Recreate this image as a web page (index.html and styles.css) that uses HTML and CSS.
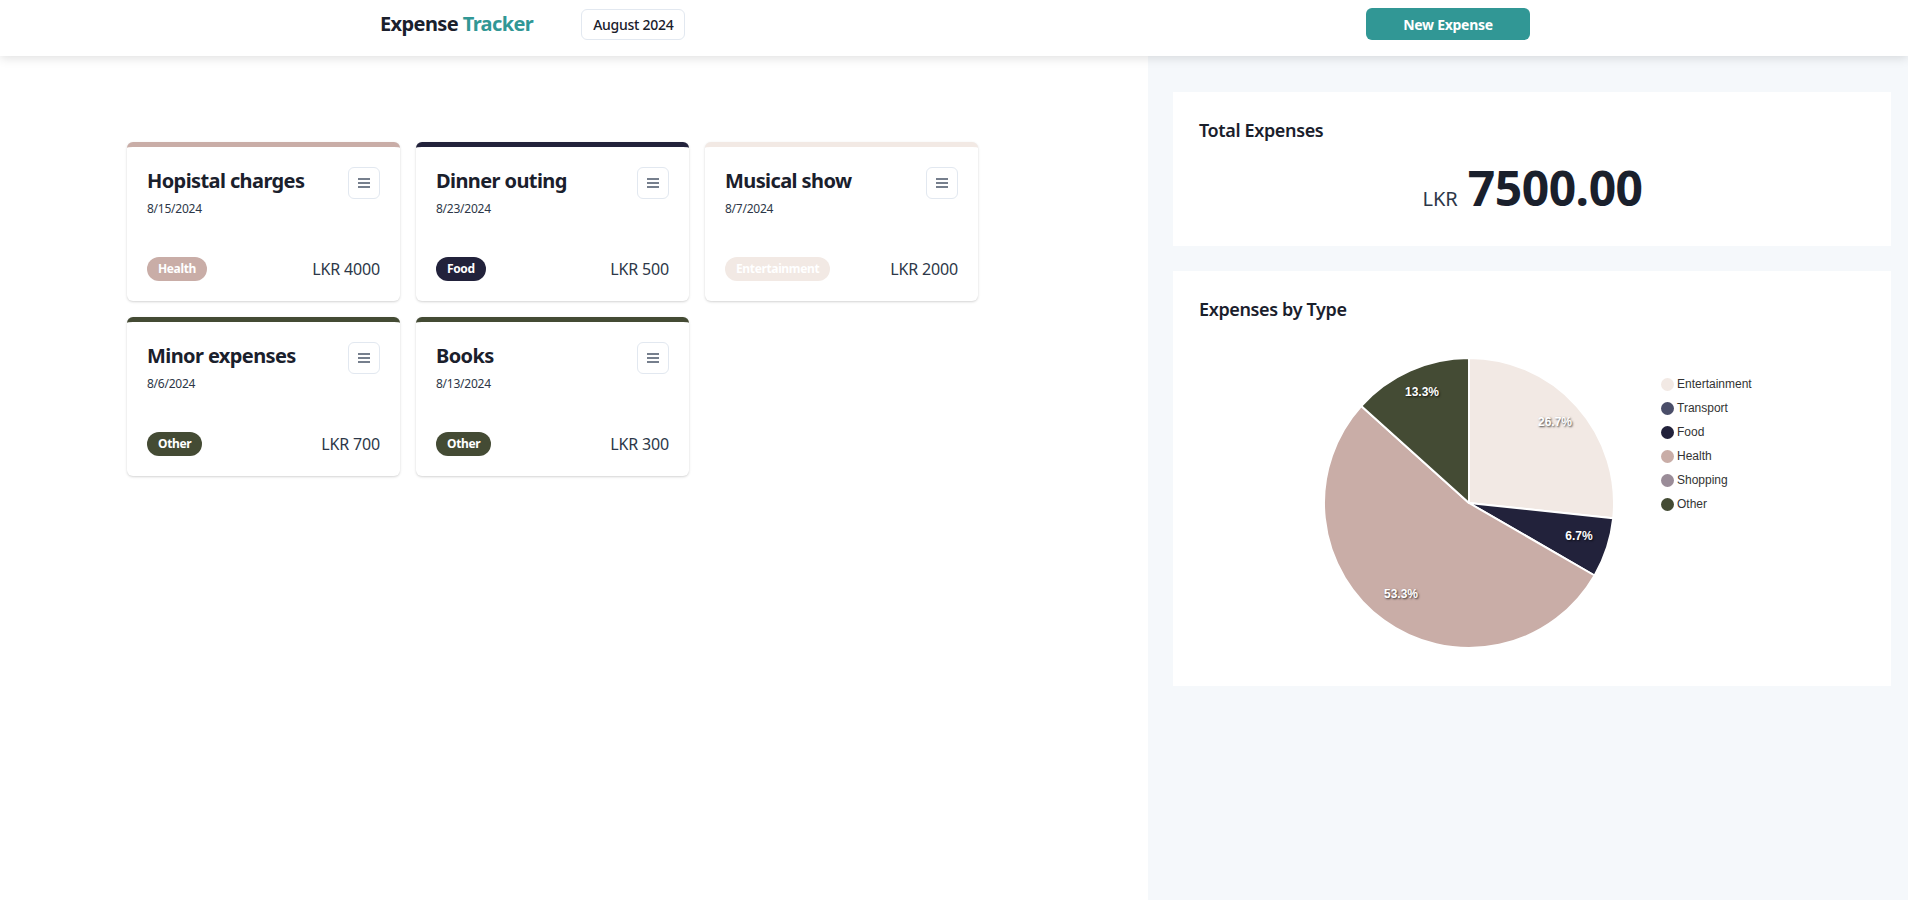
FILE: index.html
```html
<!DOCTYPE html>
<html lang="en">
<head>
<meta charset="utf-8">
<title>Expense Tracker</title>
<link rel="stylesheet" href="styles.css">
</head>
<body>
<header class="topbar">
  <div class="topbar-inner">
    <h1 class="brand">Expense <span class="brand-accent">Tracker</span></h1>
    <button class="month-btn">August 2024</button>
    <button class="new-btn">New Expense</button>
  </div>
</header>
<main class="layout">
  <section class="expenses">
    <div class="card-grid">
      <article class="card card-health">
        <div class="card-head">
          <div>
            <h2 class="card-title">Hopistal charges</h2>
            <div class="card-date">8/15/2024</div>
          </div>
          <button class="menu-btn"><svg width="12" height="10" viewBox="0 0 12 10"><path d="M0 1h12M0 5h12M0 9h12" stroke="#4a5568" stroke-width="1.5"/></svg></button>
        </div>
        <div class="card-foot">
          <span class="tag tag-health">Health</span>
          <span class="amount">LKR 4000</span>
        </div>
      </article>
      <article class="card card-food">
        <div class="card-head">
          <div>
            <h2 class="card-title">Dinner outing</h2>
            <div class="card-date">8/23/2024</div>
          </div>
          <button class="menu-btn"><svg width="12" height="10" viewBox="0 0 12 10"><path d="M0 1h12M0 5h12M0 9h12" stroke="#4a5568" stroke-width="1.5"/></svg></button>
        </div>
        <div class="card-foot">
          <span class="tag tag-food">Food</span>
          <span class="amount">LKR 500</span>
        </div>
      </article>
      <article class="card card-ent">
        <div class="card-head">
          <div>
            <h2 class="card-title">Musical show</h2>
            <div class="card-date">8/7/2024</div>
          </div>
          <button class="menu-btn"><svg width="12" height="10" viewBox="0 0 12 10"><path d="M0 1h12M0 5h12M0 9h12" stroke="#4a5568" stroke-width="1.5"/></svg></button>
        </div>
        <div class="card-foot">
          <span class="tag tag-ent">Entertainment</span>
          <span class="amount">LKR 2000</span>
        </div>
      </article>
      <article class="card card-other">
        <div class="card-head">
          <div>
            <h2 class="card-title">Minor expenses</h2>
            <div class="card-date">8/6/2024</div>
          </div>
          <button class="menu-btn"><svg width="12" height="10" viewBox="0 0 12 10"><path d="M0 1h12M0 5h12M0 9h12" stroke="#4a5568" stroke-width="1.5"/></svg></button>
        </div>
        <div class="card-foot">
          <span class="tag tag-other">Other</span>
          <span class="amount">LKR 700</span>
        </div>
      </article>
      <article class="card card-other">
        <div class="card-head">
          <div>
            <h2 class="card-title">Books</h2>
            <div class="card-date">8/13/2024</div>
          </div>
          <button class="menu-btn"><svg width="12" height="10" viewBox="0 0 12 10"><path d="M0 1h12M0 5h12M0 9h12" stroke="#4a5568" stroke-width="1.5"/></svg></button>
        </div>
        <div class="card-foot">
          <span class="tag tag-other">Other</span>
          <span class="amount">LKR 300</span>
        </div>
      </article>
    </div>
  </section>
  <aside class="sidebar">
    <div class="panel total-panel">
      <h3 class="panel-title">Total Expenses</h3>
      <div class="total-row">
        <span class="total-cur">LKR</span>
        <span class="total-num">7500.00</span>
      </div>
    </div>
    <div class="panel chart-panel">
      <h3 class="panel-title">Expenses by Type</h3>
      <div class="chart-row">
        <svg class="pie" width="292" height="292" viewBox="0 0 292 292">
          <g stroke="#ffffff" stroke-width="2" stroke-linejoin="round">
            <path d="M146 146 L146 1 A145 145 0 0 1 290.21 161.16 Z" fill="#f2e9e4"/>
            <path d="M146 146 L290.21 161.16 A145 145 0 0 1 271.57 218.5 Z" fill="#22223b"/>
            <path d="M146 146 L271.57 218.5 A145 145 0 1 1 38.24 48.98 Z" fill="#c9ada7"/>
            <path d="M146 146 L38.24 48.98 A145 145 0 0 1 146 1 Z" fill="#444b34"/>
          </g>
          <g class="pie-labels" text-anchor="middle" dominant-baseline="central">
            <text x="232" y="65">26.7%</text>
            <text x="256" y="179">6.7%</text>
            <text x="78" y="237">53.3%</text>
            <text x="99" y="35">13.3%</text>
          </g>
        </svg>
        <ul class="legend">
          <li class="legend-item"><span class="dot dot-ent"></span>Entertainment</li>
          <li class="legend-item"><span class="dot dot-transport"></span>Transport</li>
          <li class="legend-item"><span class="dot dot-food"></span>Food</li>
          <li class="legend-item"><span class="dot dot-health"></span>Health</li>
          <li class="legend-item"><span class="dot dot-shopping"></span>Shopping</li>
          <li class="legend-item"><span class="dot dot-other"></span>Other</li>
        </ul>
      </div>
    </div>
  </aside>
</main>
</body>
</html>
```
FILE: styles.css
```css
* { box-sizing: border-box; }
html, body { height: 100%; }
body {
  margin: 0;
  font-family: "Noto Sans", "Open Sans", sans-serif;
  color: #1a202c;
  background: #ffffff;
  display: flex;
  flex-direction: column;
  overflow: hidden;
}
button { font-family: inherit; cursor: pointer; }

.topbar {
  height: 56px;
  flex: none;
  padding-bottom: 8px;
  background: #ffffff;
  box-shadow: 0 2px 10px rgba(0, 0, 0, 0.13);
  position: relative;
  z-index: 2;
}
.topbar-inner {
  max-width: 1152px;
  height: 100%;
  margin: 0 auto;
  display: flex;
  align-items: center;
}
.brand {
  margin: 0 0 0 2px;
  font-size: 20px;
  font-weight: 700;
  line-height: 28px;
  letter-spacing: -0.03em;
  color: #1a202c;
}
.brand-accent { color: #319795; }
.month-btn {
  margin-left: 48px;
  height: 31px;
  padding: 0 11px;
  background: #ffffff;
  border: 1px solid #e2e8f0;
  border-radius: 6px;
  font-size: 14px;
  font-weight: 500;
  letter-spacing: -0.02em;
  color: #1a202c;
}
.new-btn {
  margin-left: auto;
  width: 164px;
  height: 32px;
  background: #319795;
  color: #ffffff;
  border: none;
  border-radius: 6px;
  font-size: 14px;
  font-weight: 700;
  letter-spacing: -0.02em;
}

.layout {
  flex: 1;
  display: flex;
  min-height: 0;
}
.expenses {
  width: 1148px;
  flex: none;
  padding: 86px 0 0 127px;
}
.card-grid {
  display: grid;
  grid-template-columns: repeat(3, 273px);
  gap: 16px;
}
.card {
  height: 159px;
  background: #ffffff;
  border-radius: 6px;
  border-top: 5px solid #c9ada7;
  box-shadow: 0 1px 3px rgba(0, 0, 0, 0.12), 0 1px 2px rgba(0, 0, 0, 0.06);
  padding: 20px;
  display: flex;
  flex-direction: column;
  justify-content: space-between;
}
.card-health { border-top-color: #c9ada7; }
.card-food { border-top-color: #22223b; }
.card-ent { border-top-color: #f2e9e4; }
.card-other { border-top-color: #444b34; }

.card-head {
  display: flex;
  justify-content: space-between;
  align-items: flex-start;
}
.card-title {
  margin: 0;
  font-size: 20px;
  font-weight: 700;
  line-height: 28px;
  letter-spacing: -0.03em;
  color: #1a202c;
}
.card-date {
  margin-top: 6px;
  font-size: 12px;
  line-height: 16px;
  letter-spacing: -0.02em;
  color: #2d3748;
}
.menu-btn {
  width: 32px;
  height: 32px;
  flex: none;
  padding: 0;
  background: #ffffff;
  border: 1px solid #e2e8f0;
  border-radius: 6px;
  display: flex;
  align-items: center;
  justify-content: center;
}
.card-foot {
  display: flex;
  justify-content: space-between;
  align-items: center;
}
.tag {
  height: 24px;
  padding: 0 11px;
  border-radius: 12px;
  font-size: 12px;
  font-weight: 700;
  line-height: 24px;
  letter-spacing: -0.03em;
  color: #ffffff;
}
.tag-health { background: #c9ada7; }
.tag-food { background: #22223b; }
.tag-ent { background: #f2e9e4; }
.tag-other { background: #444b34; }
.amount {
  font-size: 16px;
  letter-spacing: -0.01em;
  color: #2d3748;
}

.sidebar {
  flex: 1;
  background: #f5f8fb;
  padding: 36px 17px 0 25px;
  display: flex;
  flex-direction: column;
  gap: 25px;
}
.panel {
  background: #ffffff;
  padding: 25px 25px 25px 26px;
}
.panel-title {
  margin: 0;
  font-size: 18px;
  font-weight: 600;
  line-height: 27px;
  letter-spacing: -0.02em;
  color: #1a202c;
}
.total-panel { height: 154px; }
.total-row {
  margin-top: 20px;
  display: flex;
  justify-content: center;
  align-items: baseline;
  gap: 10px;
}
.total-cur {
  font-size: 20px;
  color: #2d3748;
}
.total-num {
  font-size: 48px;
  font-weight: 700;
  line-height: 48px;
  letter-spacing: -0.01em;
  color: #1a202c;
}

.chart-panel { height: 415px; }
.chart-row {
  margin-top: 34px;
  padding-left: 124px;
  display: flex;
  align-items: flex-start;
}
.pie { flex: none; display: block; }
.pie-labels text {
  font-family: "Liberation Sans", Arial, sans-serif;
  font-size: 12px;
  font-weight: 700;
  fill: #ffffff;
  text-shadow: 1px 1px 2px rgba(0, 0, 0, 0.7);
}
.legend {
  list-style: none;
  margin: 15px 0 0 46px;
  padding: 0;
  font-family: "Liberation Sans", Arial, sans-serif;
  font-size: 12px;
  color: #333333;
}
.legend-item {
  height: 24px;
  display: flex;
  align-items: center;
  gap: 3px;
}
.dot {
  width: 13px;
  height: 13px;
  border-radius: 50%;
  flex: none;
}
.dot-ent { background: #f2e9e4; }
.dot-transport { background: #4a4e69; }
.dot-food { background: #22223b; }
.dot-health { background: #c9ada7; }
.dot-shopping { background: #9a8c98; }
.dot-other { background: #444b34; }
```
